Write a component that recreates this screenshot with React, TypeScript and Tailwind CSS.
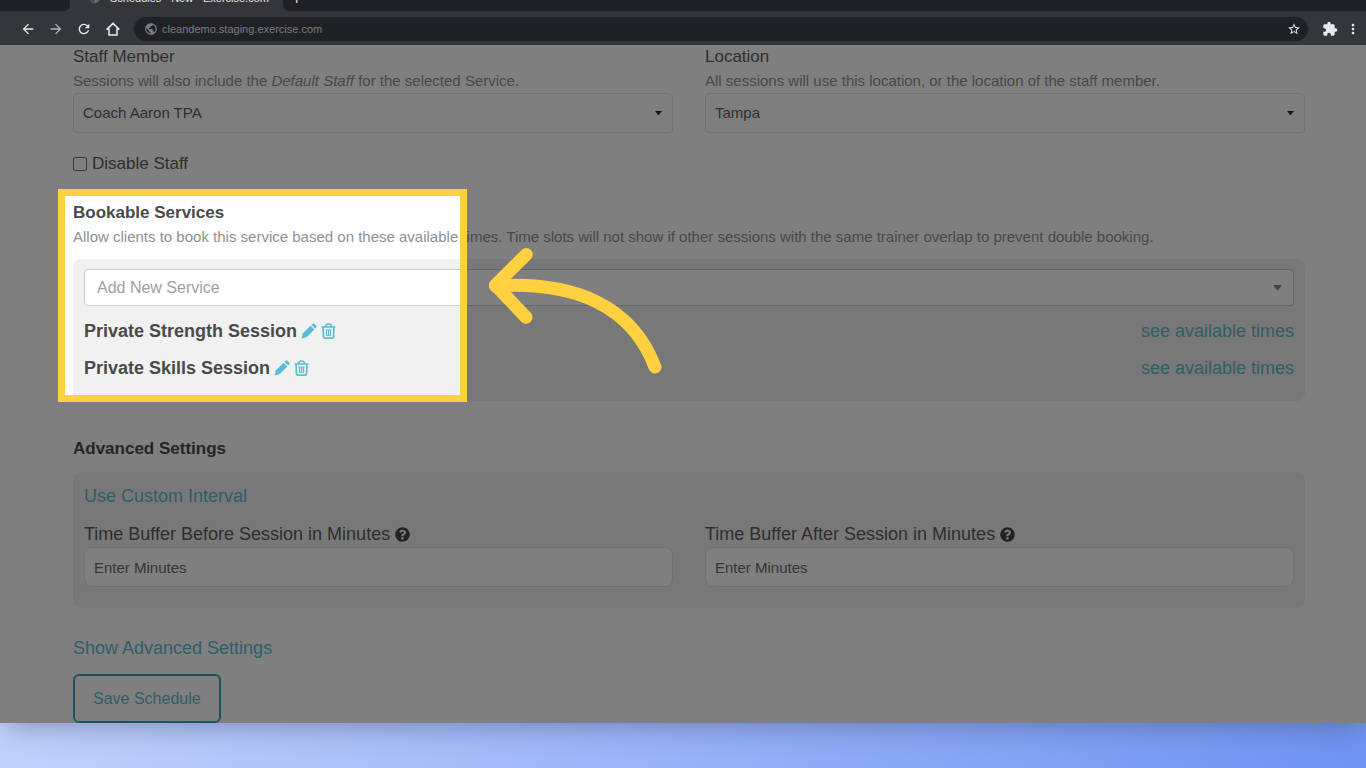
import type { ReactNode } from "react";
import {
  MdArrowBack,
  MdArrowForward,
  MdExtension,
  MdMoreVert,
  MdPublic,
  MdRefresh,
  MdStarBorder,
} from "react-icons/md";
import { FaQuestionCircle } from "react-icons/fa";

const services = ["Private Strength Session", "Private Skills Session"];

function PencilIcon() {
  return (
    <svg width="16" height="16" viewBox="0 0 16 16" fill="currentColor" aria-hidden="true">
      <path d="M.6 15.400 1.900 10.300 9.600 2.700l3.800 3.700-7.700 7.700z" />
      <path d="M10.500 1.900 11.500.9c.6-.6 1.500-.6 2.100 0l1.600 1.600c.6.6.6 1.500 0 2.100l-1 1z" />
    </svg>
  );
}

function TrashIcon() {
  return (
    <svg
      width="15"
      height="16"
      viewBox="0 0 15 16"
      fill="none"
      stroke="currentColor"
      strokeLinejoin="round"
      aria-hidden="true"
    >
      <path d="M.6 4h13.800M4.300 3.800C4.500 1.900 5.500 1 7.500 1s3 .9 3.200 2.800" strokeWidth="1.700" />
      <path d="M2 4l.5 9.800c.1.800.600 1.300 1.400 1.300h7.200c.8 0 1.300-.5 1.400-1.300L13 4" strokeWidth="1.700" />
      <path d="M5.500 7v5.500M7.500 7v5.500M9.500 7v5.500" strokeWidth="1.200" />
      <path d="M4.500 7h6M5 12.500h5" strokeWidth=".8" />
    </svg>
  );
}

function HomeIcon() {
  return (
    <svg
      width="14"
      height="14"
      viewBox="0 0 14 14"
      fill="none"
      stroke="currentColor"
      strokeWidth="1.500"
      aria-hidden="true"
    >
      <path d="M.6 7.600 7 1.400l6.400 6.200M.6 7.200h2.400v5.700h8V7.200h2.400" />
    </svg>
  );
}

function BrowserBar() {
  return (
    <header className="bg-[#35363a] text-[#e8eaed]">
      <div className="flex h-[11px] items-end overflow-hidden">
        <div className="h-full w-[70px] shrink-0 rounded-br-md bg-[#202124]" />
        <div className="flex w-[213px] shrink-0 items-center gap-[9px] pb-[5px] pl-[19px] text-[11px] leading-4">
          <MdPublic className="size-3 shrink-0 text-[#6b6c70]" />
          <span className="whitespace-nowrap">Schedules - New - Exercise.com</span>
        </div>
        <div className="flex h-full flex-1 items-end rounded-bl-md bg-[#202124] pb-1 pl-[9px] text-base leading-4">
          +
        </div>
      </div>
      <div className="flex h-[34px] items-center pt-[2px] pr-[5px] pl-5">
        <button aria-label="Back" className="w-7">
          <MdArrowBack className="size-4" />
        </button>
        <button aria-label="Forward" className="w-7 text-[#b4b5b8]">
          <MdArrowForward className="size-4" />
        </button>
        <button aria-label="Reload" className="w-[30px]">
          <MdRefresh className="size-4" />
        </button>
        <button aria-label="Home" className="w-7">
          <HomeIcon />
        </button>
        <div className="flex h-6 flex-1 items-center gap-1 rounded-full bg-[#202124] px-[10px] text-[#7c7d81]">
          <MdPublic className="size-[14px] shrink-0" />
          <input
            aria-label="Address"
            className="min-w-0 flex-1 text-[11px] outline-none"
            defaultValue="cleandemo.staging.exercise.com"
          />
          <button aria-label="Bookmark" className="-mr-[3px] text-[#e8eaed]">
            <MdStarBorder className="size-[14px]" />
          </button>
        </div>
        <button aria-label="Extensions" className="ml-[14px]">
          <MdExtension className="size-4" />
        </button>
        <button aria-label="Menu" className="ml-[7px]">
          <MdMoreVert className="size-4" />
        </button>
      </div>
    </header>
  );
}

function Caret({ className }: { className: string }) {
  return (
    <svg viewBox="0 0 8 5" aria-hidden="true" className={`pointer-events-none absolute ${className}`}>
      <path d="M0 0h8L4 5z" fill="currentColor" />
    </svg>
  );
}

type SelectFieldProps = {
  id: string;
  label: string;
  hint: ReactNode;
  value: string;
};

function SelectField({ id, label, hint, value }: SelectFieldProps) {
  return (
    <div>
      <label htmlFor={id} className="block text-[17px] leading-6">
        {label}
      </label>
      <p className="text-[15px] leading-6 text-[#909090]">{hint}</p>
      <div className="relative">
        <select
          id={id}
          className="h-10 w-full appearance-none rounded border border-[#e2e2e2] bg-[#fcfcfc] px-[9px] text-[15px]"
        >
          <option>{value}</option>
        </select>
        <Caret className="top-[18px] right-[11px] w-[7px] text-[#222]" />
      </div>
    </div>
  );
}

function MinutesField({ id, label }: { id: string; label: string }) {
  return (
    <div>
      <label htmlFor={id} className="flex items-center gap-[5px] text-lg leading-[26px]">
        {label}
        <FaQuestionCircle className="size-[15px] text-[#444]" />
      </label>
      <input
        id={id}
        placeholder="Enter Minutes"
        className="h-10 w-full rounded-lg border border-[#e2e2e2] bg-white px-[9px] text-[15px] placeholder:text-[#6a6a6a]"
      />
    </div>
  );
}

// Dims everything around the frame and points at it
function Spotlight() {
  return (
    <>
      <div className="pointer-events-none absolute -top-3 -left-[15px] z-10 h-[213px] w-[409px] border-[7px] border-[#ffd140] shadow-[0_0_0_3000px_rgba(0,0,0,0.5)]" />
      <svg
        width="174"
        height="126"
        viewBox="488 248 174 126"
        fill="none"
        stroke="#ffd140"
        strokeWidth="13"
        strokeLinecap="round"
        strokeLinejoin="round"
        aria-hidden="true"
        className="pointer-events-none absolute top-[47px] left-[415px] z-10"
      >
        <path d="M526.300 254.500 495.500 285l30.500 32.300" />
        <path d="M495.500 286C575 281 632 306 655 367" />
      </svg>
    </>
  );
}

export default function App() {
  return (
    <div className="min-h-screen overflow-hidden bg-linear-to-r from-[#c3d2fc] to-[#7093f2] pb-[45px] font-['Liberation_Sans',Arial,sans-serif]">
      <div className="shadow-[0_8px_28px_-6px_rgba(60,70,110,0.5)]">
        <BrowserBar />
        <main className="relative overflow-hidden bg-white pr-[61px] pl-[73px] text-[#5c5c5c]">
          <div className="grid grid-cols-2 gap-8">
            <SelectField
              id="staff"
              label="Staff Member"
              hint={
                <>
                  Sessions will also include the <em>Default Staff</em> for the selected Service.
                </>
              }
              value="Coach Aaron TPA"
            />
            <SelectField
              id="location"
              label="Location"
              hint="All sessions will use this location, or the location of the staff member."
              value="Tampa"
            />
          </div>

          <label className="mt-[19px] flex items-center gap-[5px] text-[17px] leading-6">
            <input
              type="checkbox"
              className="size-[14px] appearance-none rounded-[2px] border border-[#777] bg-white"
            />
            Disable Staff
          </label>

          <section className="relative mt-[25px]">
            <h2 className="text-[17px] leading-6 font-bold text-[#4a4a4a]">Bookable Services</h2>
            <p className="text-[15px] leading-6 text-[#909090]">
              Allow clients to book this service based on these available times. Time slots will not show if
              other sessions with the same trainer overlap to prevent double booking.
            </p>
            <div className="mt-[10px] rounded-lg bg-[#f1f1f1] px-[11px] pt-[10px] pb-[15px]">
              <div className="relative mb-[6px]">
                <select
                  aria-label="Add New Service"
                  className="h-[37px] w-full appearance-none rounded border border-[#ccc] bg-white px-3 text-base text-[#a0a0a0]"
                >
                  <option>Add New Service</option>
                </select>
                <Caret className="top-4 right-3 w-[9px] text-[#888]" />
              </div>
              {services.map((name) => (
                <div key={name} className="flex h-[37px] items-center text-lg">
                  <span className="font-bold text-[#4a4a4a]">{name}</span>
                  <button aria-label={`Edit ${name}`} className="ml-1 text-[#56bdd4]">
                    <PencilIcon />
                  </button>
                  <button aria-label={`Delete ${name}`} className="ml-1 text-[#56bdd4]">
                    <TrashIcon />
                  </button>
                  <a href="#times" className="ml-auto text-[#5bbccd]">
                    see available times
                  </a>
                </div>
              ))}
            </div>
            <Spotlight />
          </section>

          <section className="mt-9">
            <h2 className="text-[17px] leading-6 font-bold text-[#4a4a4a]">Advanced Settings</h2>
            <div className="mt-[11px] rounded-lg bg-[#f1f1f1] px-[11px] pt-3 pb-[21px]">
              <a href="#interval" className="text-lg leading-6 text-[#5bbccd]">
                Use Custom Interval
              </a>
              <div className="mt-3 grid grid-cols-2 gap-8">
                <MinutesField id="before" label="Time Buffer Before Session in Minutes" />
                <MinutesField id="after" label="Time Buffer After Session in Minutes" />
              </div>
            </div>
          </section>

          <div className="mt-7 flex flex-col items-start">
            <a href="#advanced" className="text-lg leading-6 text-[#5bbccd]">
              Show Advanced Settings
            </a>
            <button className="mt-[14px] h-[49px] rounded-md border-2 border-[#35aabd] px-[18px] text-base text-[#5bbccd]">
              Save Schedule
            </button>
          </div>
        </main>
      </div>
    </div>
  );
}
